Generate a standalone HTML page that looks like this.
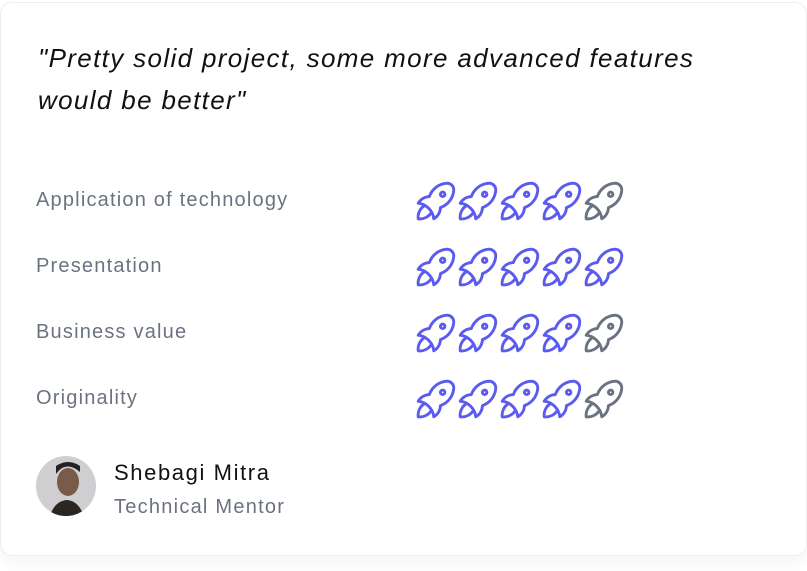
<!DOCTYPE html>
<html><head><style>
body{margin:0;width:807px;height:571px;background:#fff;font-family:"Liberation Sans",sans-serif;overflow:hidden;position:relative}
.card{position:absolute;left:0;top:2px;width:805px;height:552px;border:1px solid #eee;border-radius:12px;background:#fff;box-shadow:0 8px 14px rgba(0,0,0,0.04)}
.q{position:absolute;left:38px;top:37px;font-size:26px;letter-spacing:1.35px;font-style:italic;line-height:42px;color:#111}
.l{position:absolute;left:36px;font-size:20px;letter-spacing:1.2px;color:#6b7280}
.r{position:absolute;left:416px;display:flex;gap:2px}
.r svg{width:40px;height:40px}
.name{position:absolute;left:114px;top:460px;font-size:22px;letter-spacing:1.6px;color:#111}
.role{position:absolute;left:114px;top:496px;font-size:20px;letter-spacing:1.25px;color:#6b7280}
.av{position:absolute;left:36px;top:456px;width:60px;height:60px;border-radius:50%;overflow:hidden;background:#cfcfd1}
</style></head><body>
<div class="card"></div>
<div class="q">"Pretty solid project, some more advanced features<br>would be better"</div>
<svg width="0" height="0" style="position:absolute"><defs><g id="rk" fill="none" stroke-width="1.3" stroke-linecap="round" stroke-linejoin="round"><path d="M4 13a8 8 0 0 1 7 7a6 6 0 0 0 3 -5a9 9 0 0 0 6 -8a3 3 0 0 0 -3 -3a9 9 0 0 0 -8 6a6 6 0 0 0 -5 3"/><path d="M7 14a6 6 0 0 0 -3 6a6 6 0 0 0 6 -3"/><circle cx="15" cy="9" r="1"/></g></defs></svg>
<div class="l" style="top:189px">Application of technology</div>
<div class="l" style="top:255px">Presentation</div>
<div class="l" style="top:321px">Business value</div>
<div class="l" style="top:387px">Originality</div>
<div class="r" style="top:181px"><svg viewBox="3 3 18 18" stroke="#5b5bf0"><use href="#rk"/></svg><svg viewBox="3 3 18 18" stroke="#5b5bf0"><use href="#rk"/></svg><svg viewBox="3 3 18 18" stroke="#5b5bf0"><use href="#rk"/></svg><svg viewBox="3 3 18 18" stroke="#5b5bf0"><use href="#rk"/></svg><svg viewBox="3 3 18 18" stroke="#6b7280"><use href="#rk"/></svg></div>
<div class="r" style="top:247px"><svg viewBox="3 3 18 18" stroke="#5b5bf0"><use href="#rk"/></svg><svg viewBox="3 3 18 18" stroke="#5b5bf0"><use href="#rk"/></svg><svg viewBox="3 3 18 18" stroke="#5b5bf0"><use href="#rk"/></svg><svg viewBox="3 3 18 18" stroke="#5b5bf0"><use href="#rk"/></svg><svg viewBox="3 3 18 18" stroke="#5b5bf0"><use href="#rk"/></svg></div>
<div class="r" style="top:313px"><svg viewBox="3 3 18 18" stroke="#5b5bf0"><use href="#rk"/></svg><svg viewBox="3 3 18 18" stroke="#5b5bf0"><use href="#rk"/></svg><svg viewBox="3 3 18 18" stroke="#5b5bf0"><use href="#rk"/></svg><svg viewBox="3 3 18 18" stroke="#5b5bf0"><use href="#rk"/></svg><svg viewBox="3 3 18 18" stroke="#6b7280"><use href="#rk"/></svg></div>
<div class="r" style="top:379px"><svg viewBox="3 3 18 18" stroke="#5b5bf0"><use href="#rk"/></svg><svg viewBox="3 3 18 18" stroke="#5b5bf0"><use href="#rk"/></svg><svg viewBox="3 3 18 18" stroke="#5b5bf0"><use href="#rk"/></svg><svg viewBox="3 3 18 18" stroke="#5b5bf0"><use href="#rk"/></svg><svg viewBox="3 3 18 18" stroke="#6b7280"><use href="#rk"/></svg></div>
<div class="av"><svg width="60" height="60" viewBox="0 0 60 60"><ellipse cx="32" cy="26" rx="11" ry="14" fill="#7a5a48"/><path d="M20 18q10-14 24 -2l0 -6q-12-8-24 0z" fill="#222"/><path d="M14 60q4-14 16-16q12 0 18 16z" fill="#2b2622"/></svg></div>
<div class="name">Shebagi Mitra</div>
<div class="role">Technical Mentor</div>
</body></html>
